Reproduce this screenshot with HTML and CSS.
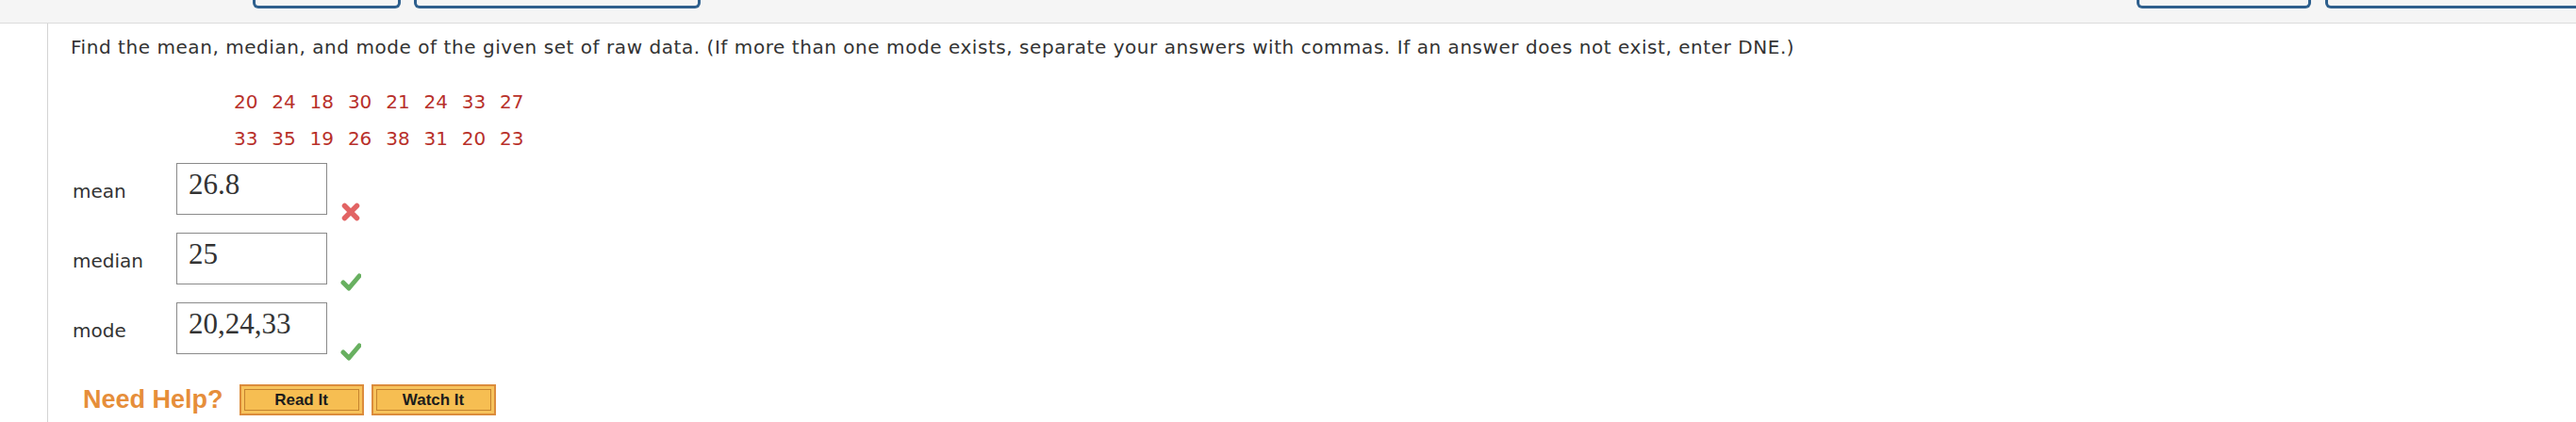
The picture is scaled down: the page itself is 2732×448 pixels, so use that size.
FILE: index.html
```html
<!DOCTYPE html>
<html lang="en">
<head>
    <meta charset="UTF-8">
    <meta name="viewport" content="width=device-width, initial-scale=1.0">
    <title>Mean, median, mode</title>
    <link rel="stylesheet" href="styles.css">
</head>
<body>

    <div class="toolbar">
        <div class="tab tab-small"></div>
        <div class="tab tab-wide"></div>
        <div class="toolbar-right">
            <div class="tab tab-mid"></div>
            <div class="tab tab-last"></div>
        </div>
    </div>

    <div class="question">
        <p class="prompt">
            Find the mean, median, and mode of the given set of raw data. (If more than one mode exists, separate your answers with commas. If an answer does not exist, enter DNE.)
        </p>

        <div class="data">
            <div class="data-row">
                <span>20</span><span>24</span><span>18</span><span>30</span><span>21</span><span>24</span><span>33</span><span>27</span>
            </div>
            <div class="data-row">
                <span>33</span><span>35</span><span>19</span><span>26</span><span>38</span><span>31</span><span>20</span><span>23</span>
            </div>
        </div>

        <div class="answer">
            <span class="label">mean</span>
            <div class="answer-box">26.8</div>
            <svg class="mark" viewBox="0 0 22 22">
                <path d="M4.5 4.5 L17.5 17.5 M17.5 4.5 L4.5 17.5" stroke="#e26464" stroke-width="5.5" stroke-linecap="round"/>
            </svg>
        </div>

        <div class="answer">
            <span class="label">median</span>
            <div class="answer-box">25</div>
            <svg class="mark" viewBox="0 0 22 22">
                <path d="M3 12 L9 18 L20 5" fill="none" stroke="#68b060" stroke-width="5" stroke-linecap="round" stroke-linejoin="round"/>
            </svg>
        </div>

        <div class="answer">
            <span class="label">mode</span>
            <div class="answer-box">20,24,33</div>
            <svg class="mark" viewBox="0 0 22 22">
                <path d="M3 12 L9 18 L20 5" fill="none" stroke="#68b060" stroke-width="5" stroke-linecap="round" stroke-linejoin="round"/>
            </svg>
        </div>

        <div class="help">
            <span class="help-title">Need Help?</span>
            <button class="help-btn">Read It</button>
            <button class="help-btn">Watch It</button>
        </div>
    </div>

</body>
</html>
```

FILE: styles.css
```css
body {
    margin: 0;
    padding: 0;
    background-color: white;
    color: #333;
    font-family: 'DejaVu Sans', Verdana, sans-serif;
    overflow: hidden;
}

.toolbar {
    height: 24px;
    background-color: #f5f5f5;
    border-bottom: 1px solid #dcdcdc;
    display: flex;
    align-items: flex-start;
    padding-left: 268px;
    gap: 14px;
    overflow: hidden;
}

.toolbar-right {
    margin-left: auto;
    display: flex;
    gap: 15px;
    margin-right: -40px;
}

.tab {
    height: 6px;
    border: 3px solid #2e5f8d;
    border-top: none;
    border-radius: 0 0 6px 6px;
    background-color: #f5f5f5;
}

.tab-small {
    width: 151px;
}

.tab-wide {
    width: 298px;
}

.tab-mid {
    width: 179px;
}

.tab-last {
    width: 300px;
}

.question {
    margin-left: 50px;
    border-left: 1px solid #d4d4d4;
    height: calc(100vh - 25px);
    padding: 13px 0 0 24px;
    box-sizing: border-box;
}

.prompt {
    margin: 0;
    font-size: 20px;
    line-height: 24px;
    letter-spacing: 0.55px;
}

.data {
    margin: 27px 0 0 173px;
    color: #b8302a;
    font-size: 20px;
}

.data-row {
    display: flex;
    line-height: 39px;
}

.data-row span {
    width: 40.3px;
}

.answer {
    display: flex;
    align-items: flex-start;
    margin-top: 19px;
}

.data + .answer {
    margin-top: 6px;
}

.label {
    width: 110px;
    padding: 18px 0 0 2px;
    font-size: 20px;
    line-height: 24px;
}

.answer-box {
    width: 146px;
    height: 53px;
    border: 1px solid #8a8a8a;
    padding-left: 12px;
    font-family: 'Liberation Serif', 'Times New Roman', serif;
    font-size: 31px;
    line-height: 44px;
    color: #333;
}

.mark {
    width: 22px;
    height: 22px;
    align-self: flex-end;
    margin: 0 0 -8px 14px;
}

.help {
    display: flex;
    align-items: center;
    margin: 32px 0 0 13px;
    height: 33px;
}

.help-title {
    font-family: 'Liberation Sans', Arial, sans-serif;
    font-weight: bold;
    font-size: 27px;
    color: #e68e3a;
    margin-right: 17px;
}

.help-btn {
    width: 132px;
    height: 33px;
    margin-right: 8px;
    border: 2px solid #dc8c3c;
    background-color: #f6be52;
    box-shadow: inset 0 0 0 3px #f7c35c, inset 0 0 0 4px #c4832f;
    font-family: 'Liberation Sans', Arial, sans-serif;
    font-weight: bold;
    font-size: 17px;
    color: #1c1c1c;
    padding: 0;
    cursor: pointer;
}
```
